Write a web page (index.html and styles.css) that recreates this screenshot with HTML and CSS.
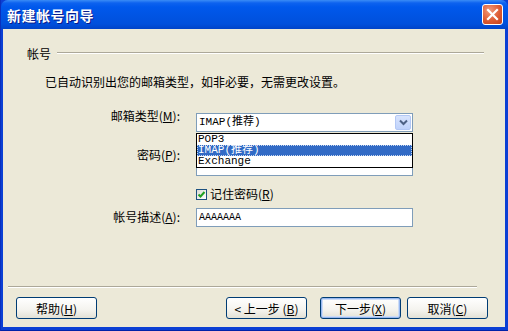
FILE: index.html
```html
<!doctype html>
<html lang="zh-CN">
<head>
    <meta charset="UTF-8">
    <title>新建帐号向导</title>
    <link rel="stylesheet" href="styles.css">
</head>
<body>
<div class="window">
    <div class="titlebar">
        <span class="title">新建帐号向导</span>
        <span class="close">
            <svg width="13" height="13" viewBox="0 0 13 13">
                <path d="M2 2 L11 11 M11 2 L2 11" stroke="#fff" stroke-width="2.2" stroke-linecap="square"/>
            </svg>
        </span>
    </div>

    <div class="client">
        <div class="group">
            <span>帐号</span>
            <i class="rule"></i>
        </div>

        <p class="intro">已自动识别出您的邮箱类型，如非必要，无需更改设置。</p>

        <div class="row row-type">
            <span class="label">邮箱类型(<u>M</u>):</span>
            <div class="combo">
                <span class="value">IMAP(推荐)</span>
                <span class="drop">
                    <svg width="9" height="7" viewBox="0 0 9 7">
                        <path d="M1 1.5 L4.5 5 L8 1.5" fill="none" stroke="#4d6185" stroke-width="2"/>
                    </svg>
                </span>
                <ul class="list">
                    <li>POP3</li>
                    <li class="selected">IMAP(推荐)</li>
                    <li>Exchange</li>
                </ul>
            </div>
        </div>

        <div class="row row-pass">
            <span class="label">密码(<u>P</u>):</span>
            <div class="field"></div>
        </div>

        <div class="row row-check">
            <span class="label"></span>
            <label class="check">
                <span class="box">
                    <svg width="9" height="9" viewBox="0 0 9 9">
                        <path d="M1.5 4.5 L3.5 6.5 L7.5 2" fill="none" stroke="#21a121" stroke-width="2"/>
                    </svg>
                </span>
                <span>记住密码(<u>R</u>)</span>
            </label>
        </div>

        <div class="row row-desc">
            <span class="label">帐号描述(<u>A</u>):</span>
            <div class="field"><span class="value small">AAAAAAA</span></div>
        </div>

        <div class="footer">
            <i class="rule"></i>
            <div class="buttons">
                <button class="btn">帮助(<u>H</u>)</button>
                <span class="spacer"></span>
                <button class="btn">&lt; 上一步 (<u>B</u>)</button>
                <button class="btn default">下一步(<u>X</u>)</button>
                <button class="btn">取消(<u>C</u>)</button>
            </div>
        </div>
    </div>
</div>
</body>
</html>
```

FILE: styles.css
```css
* {
    box-sizing: border-box;
}

html, body {
    margin: 0;
    padding: 0;
}

body {
    width: 508px;
    height: 331px;
    overflow: hidden;
    font-family: "Noto Sans CJK SC", "Liberation Sans", sans-serif;
    font-size: 12px;
    color: #000;
}

u {
    text-decoration: underline;
}

.window {
    width: 508px;
    height: 331px;
    display: flex;
    flex-direction: column;
    background: #0b3fd4;
    border-left: 1px solid #0a2fbd;
    border-bottom: 1px solid #0021a8;
}

.titlebar {
    height: 29px;
    flex: none;
    display: flex;
    align-items: center;
    justify-content: space-between;
    padding: 0 5px 0 6px;
    background: linear-gradient(#3a8cf6 0, #0d62ef 3px, #0058ec 7px, #0054e3 16px, #0050dc 24px, #0043c8 29px);
    border-radius: 7px 7px 0 0;
}

.title {
    color: #fff;
    font-weight: bold;
    font-size: 14px;
    letter-spacing: 0.5px;
    text-shadow: 1px 1px #0a1c8a;
}

.close {
    width: 21px;
    height: 21px;
    display: flex;
    align-items: center;
    justify-content: center;
    border: 1px solid #fff;
    border-radius: 3px;
    background: radial-gradient(circle at 35% 30%, #f09a7c, #dd5b33 55%, #c2401c);
}

.client {
    flex: 1;
    margin: 0 3px 3px 2px;
    background: #ece9d8;
    display: flex;
    flex-direction: column;
}

.group {
    display: flex;
    align-items: center;
    height: 14px;
    margin-top: 17px;
    padding-left: 24px;
    gap: 6px;
}

.rule {
    display: block;
    height: 2px;
    border-top: 1px solid #aca899;
    border-bottom: 1px solid #fff;
}

.group .rule {
    width: 427px;
}

.intro {
    margin: 15px 0 0 42px;
    line-height: 14px;
}

.row {
    display: flex;
    align-items: flex-start;
    gap: 16px;
}

.label {
    width: 177px;
    flex: none;
    text-align: right;
    line-height: 14px;
}

.row-type {
    margin-top: 24px;
    position: relative;
    z-index: 2;
}

.row-type .label {
    margin-top: -4px;
}

.row-pass {
    margin-top: 25px;
}

.row-pass .label {
    margin-top: -9px;
}

.row-check {
    margin-top: 11px;
}

.row-desc {
    margin-top: 7px;
}

.row-desc .label {
    margin-top: 2px;
}

.combo,
.field {
    position: relative;
    width: 217px;
    height: 19px;
    background: #fff;
    border: 1px solid #7f9db9;
    display: flex;
    align-items: center;
    padding-left: 2px;
}

.value {
    font-family: "Liberation Mono", "Noto Sans CJK SC", monospace;
    font-size: 11px;
    line-height: 13px;
}

.value.small {
    font-size: 10px;
}

.drop {
    position: absolute;
    top: 1px;
    right: 1px;
    bottom: 1px;
    width: 16px;
    display: flex;
    align-items: center;
    justify-content: center;
    background: linear-gradient(#d8e4fd, #bfd2fb);
    border: 1px solid #b3c8f5;
    border-radius: 2px;
}

.list {
    position: absolute;
    left: -1px;
    top: 19px;
    width: 217px;
    margin: 0;
    padding: 0;
    list-style: none;
    background: #fff;
    border: 1px solid #000;
}

.list li {
    height: 11px;
    line-height: 11px;
    padding-left: 1px;
    font-family: "Liberation Mono", "Noto Sans CJK SC", monospace;
    font-size: 11px;
}

.list li.selected {
    background: #316ac5;
    color: #fff;
    outline: 1px dotted #c8d8f0;
    outline-offset: -1px;
}

.check {
    display: flex;
    align-items: center;
    gap: 3px;
    line-height: 14px;
}

.box {
    width: 11px;
    height: 11px;
    display: flex;
    align-items: center;
    justify-content: center;
    border: 1px solid #1c5180;
    background: linear-gradient(135deg, #dcdcd7, #fff);
}

.footer {
    margin-top: auto;
    padding-bottom: 8px;
}

.footer .rule {
    margin: 0 28px 0 5px;
}

.buttons {
    display: flex;
    margin-top: 9px;
    padding: 0 17px 0 13px;
}

.spacer {
    flex: 1;
}

.btn {
    width: 81px;
    height: 22px;
    padding: 0;
    font-family: inherit;
    font-size: 12px;
    color: #000;
    background: linear-gradient(#fff, #f4f3ee 60%, #e3e1d6);
    border: 1px solid #003c74;
    border-radius: 3px;
}

.btn + .btn {
    margin-left: 6px;
}

.btn.default {
    margin-left: 13px;
    box-shadow: inset 0 0 0 1px #97b8f0, inset 0 0 0 2px #cddcf6;
}
```
